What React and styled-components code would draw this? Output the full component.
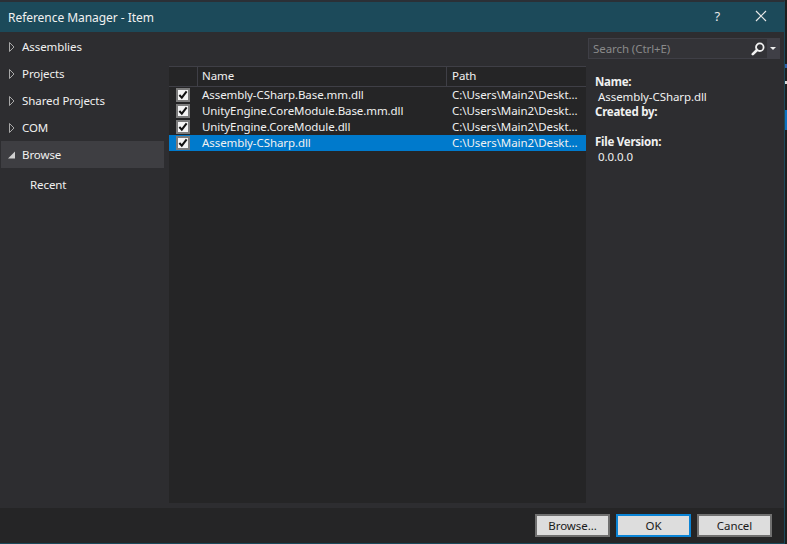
import styled, { createGlobalStyle } from "styled-components";

const FONT = `"Noto Sans", "Open Sans", sans-serif`;

const GlobalStyle = createGlobalStyle`
  html, body {
    margin: 0;
    padding: 0;
    background: #1e1e1e;
  }
  * {
    box-sizing: border-box;
  }
`;

const navItems = [
  { label: "Assemblies", arrow: true },
  { label: "Projects", arrow: true },
  { label: "Shared Projects", arrow: true },
  { label: "COM", arrow: true },
  { label: "Browse", open: true, selected: true },
];

const files = [
  { name: "Assembly-CSharp.Base.mm.dll" },
  { name: "UnityEngine.CoreModule.Base.mm.dll" },
  { name: "UnityEngine.CoreModule.dll" },
  { name: "Assembly-CSharp.dll", selected: true },
];

const PATH = "C:\\Users\\Main2\\Deskt...";

const App = () => {
  return (
    <Page>
      <GlobalStyle />
      <Window>
        <TitleBar>
          <Title>Reference Manager - Item</Title>
          <HelpGlyph>?</HelpGlyph>
          <CloseIcon viewBox="0 0 12 12">
            <path d="M1 1 L11 11 M11 1 L1 11" />
          </CloseIcon>
        </TitleBar>
        <Body>
          <Nav>
            {navItems.map((item) => (
              <NavRow key={item.label} $selected={item.selected}>
                <Arrow viewBox="0 0 8 10">
                  {item.open ? (
                    <path d="M7 1.5 V8.5 H0 Z" fill="#d0d0d0" />
                  ) : (
                    <path d="M1.5 0.5 L6 5 L1.5 9.5 Z" fill="none" stroke="#a8a8a8" />
                  )}
                </Arrow>
                {item.label}
              </NavRow>
            ))}
            <RecentRow>Recent</RecentRow>
          </Nav>
          <Table>
            <HeaderRow>
              <CheckHead />
              <NameHead>Name</NameHead>
              <PathHead>Path</PathHead>
            </HeaderRow>
            {files.map((file) => (
              <FileRow key={file.name} $selected={file.selected}>
                <CheckBox>
                  <svg width="10" height="10" viewBox="0 0 11 11">
                    <path d="M1.5 5.5 L4.2 8.5 L9.5 1.5" fill="none" stroke="#111" strokeWidth="2.2" />
                  </svg>
                </CheckBox>
                <NameCell>{file.name}</NameCell>
                <PathCell>{PATH}</PathCell>
              </FileRow>
            ))}
          </Table>
          <Side>
            <SearchBox>
              <SearchText>Search (Ctrl+E)</SearchText>
              <SearchIcon viewBox="0 0 14 14">
                <circle cx="8.8" cy="5.2" r="3.8" fill="none" stroke="#f2f2f2" strokeWidth="1.8" />
                <path d="M6 8 L1.8 12.2" stroke="#f2f2f2" strokeWidth="2.6" strokeLinecap="round" />
              </SearchIcon>
              <SearchDrop>
                <svg width="6" height="3" viewBox="0 0 6 3">
                  <path d="M0 0 H6 L3 3 Z" fill="#f0f0f0" />
                </svg>
              </SearchDrop>
            </SearchBox>
            <Details>
              <DetailLabel>Name:</DetailLabel>
              <DetailValue>Assembly-CSharp.dll</DetailValue>
              <DetailLabel>Created by:</DetailLabel>
              <DetailValue>&nbsp;</DetailValue>
              <DetailLabel>File Version:</DetailLabel>
              <DetailValue>0.0.0.0</DetailValue>
            </Details>
          </Side>
        </Body>
        <Footer>
          <DialogButton>Browse...</DialogButton>
          <DialogButton $primary>OK</DialogButton>
          <DialogButton>Cancel</DialogButton>
        </Footer>
      </Window>
      <BehindStrip>
        <StripMark $top={64} $height={4} $color="#2f5fa8" />
        <StripMark $top={13} $height={3} $color="#d8d8d8" />
        <StripMark $top={26} $height={20} $color="#0e70c0" />
      </BehindStrip>
    </Page>
  );
};

const Page = styled.div`
  width: 787px;
  height: 544px;
  display: flex;
  overflow: hidden;
  font-family: ${FONT};
  font-size: 11.5px;
  letter-spacing: -0.08px;
  color: #f1f1f1;
`;

const Window = styled.div`
  width: 785px;
  height: 544px;
  display: flex;
  flex-direction: column;
  background: #2d2d30;
  border-top: 2px solid #2b3036;
  border-right: 1px solid #1c4a5a;
  border-bottom: 1px solid #1c4a5a;
`;

const BehindStrip = styled.div`
  width: 2px;
  height: 544px;
  background: #1e1e1e;
  display: flex;
  flex-direction: column;
`;

const StripMark = styled.div`
  flex: none;
  margin-top: ${(props) => props.$top}px;
  height: ${(props) => props.$height}px;
  background: ${(props) => props.$color};
`;

const TitleBar = styled.div`
  flex: none;
  height: 30px;
  display: flex;
  align-items: center;
  padding: 0 17px 0 8px;
  background: #1c4a5a;
`;

const Title = styled.div`
  flex: 1;
  font-size: 12px;
  letter-spacing: -0.05px;
`;

const HelpGlyph = styled.div`
  margin: 0 35px 2px 0;
  font-size: 13px;
  color: #e8e8e8;
`;

const CloseIcon = styled.svg`
  width: 12px;
  height: 12px;
  margin-bottom: 2px;
  stroke: #e8e8e8;
  stroke-width: 1.2;
`;

const Body = styled.div`
  flex: 1;
  min-height: 0;
  display: grid;
  grid-template-columns: 169px 417px 1fr;
`;

const Nav = styled.nav`
  display: flex;
  flex-direction: column;
  padding: 1px 5px 0 1px;
`;

const NavRow = styled.div`
  height: 27px;
  display: flex;
  align-items: center;
  padding-left: 7px;
  background: ${(props) => (props.$selected ? "#3e3e42" : "transparent")};
`;

const Arrow = styled.svg`
  width: 8px;
  height: 10px;
  margin-right: 6px;
`;

const RecentRow = styled.div`
  height: 27px;
  margin-top: 3px;
  display: flex;
  align-items: center;
  padding-left: 29px;
`;

const Table = styled.section`
  margin: 34px 0 5px;
  background: #252526;
  display: flex;
  flex-direction: column;
`;

const HeaderRow = styled.div`
  flex: none;
  height: 21px;
  display: flex;
  border-top: 1px solid #3f3f46;
  border-bottom: 1px solid #3f3f46;
`;

const CheckHead = styled.div`
  width: 29px;
  border-right: 1px solid #3f3f46;
`;

const NameHead = styled.div`
  width: 249px;
  padding-left: 4px;
  line-height: 17px;
  border-right: 1px solid #3f3f46;
`;

const PathHead = styled.div`
  flex: 1;
  padding-left: 5px;
  line-height: 17px;
`;

const FileRow = styled.div`
  flex: none;
  height: 16px;
  display: flex;
  align-items: center;
  background: ${(props) => (props.$selected ? "#007acc" : "transparent")};
`;

const CheckBox = styled.div`
  flex: none;
  width: 14px;
  height: 14px;
  margin: 0 12px 0 7px;
  display: flex;
  align-items: center;
  justify-content: center;
  background: #f4f4f4;
  border: 2px solid #7c7c7c;
`;

const NameCell = styled.div`
  width: 250px;
  padding-bottom: 2px;
  white-space: nowrap;
`;

const PathCell = styled.div`
  flex: 1;
  padding-bottom: 2px;
  white-space: nowrap;
`;

const Side = styled.aside`
  display: flex;
  flex-direction: column;
  padding: 6px 4px 0 2px;
`;

const SearchBox = styled.div`
  height: 21px;
  display: flex;
  align-items: center;
  padding-left: 4px;
  background: #333337;
  border: 1px solid #3f3f46;
`;

const SearchText = styled.div`
  flex: 1;
  color: #8a8a8a;
`;

const SearchIcon = styled.svg`
  width: 14px;
  height: 14px;
  margin-right: 2px;
`;

const SearchDrop = styled.div`
  width: 12px;
  align-self: stretch;
  display: flex;
  align-items: center;
  justify-content: center;
  background: #3f3f46;
`;

const Details = styled.div`
  padding: 15px 0 0 7px;
  display: flex;
  flex-direction: column;
`;

const DetailLabel = styled.div`
  height: 15px;
  line-height: 15px;
  font-weight: 700;
  letter-spacing: -0.25px;
`;

const DetailValue = styled.div`
  height: 15px;
  line-height: 15px;
  padding-left: 3px;
`;

const Footer = styled.div`
  flex: none;
  height: 35px;
  display: flex;
  align-items: flex-start;
  justify-content: flex-end;
  gap: 6px;
  padding: 6px 12px 0 0;
  background: #252526;
`;

const DialogButton = styled.div`
  width: 75px;
  height: 23px;
  display: flex;
  align-items: center;
  justify-content: center;
  font-size: 11.5px;
  color: #1a1a1a;
  background: #dddddd;
  border: 2px solid ${(props) => (props.$primary ? "#0a84d6" : "#707070")};
`;

export default App;
